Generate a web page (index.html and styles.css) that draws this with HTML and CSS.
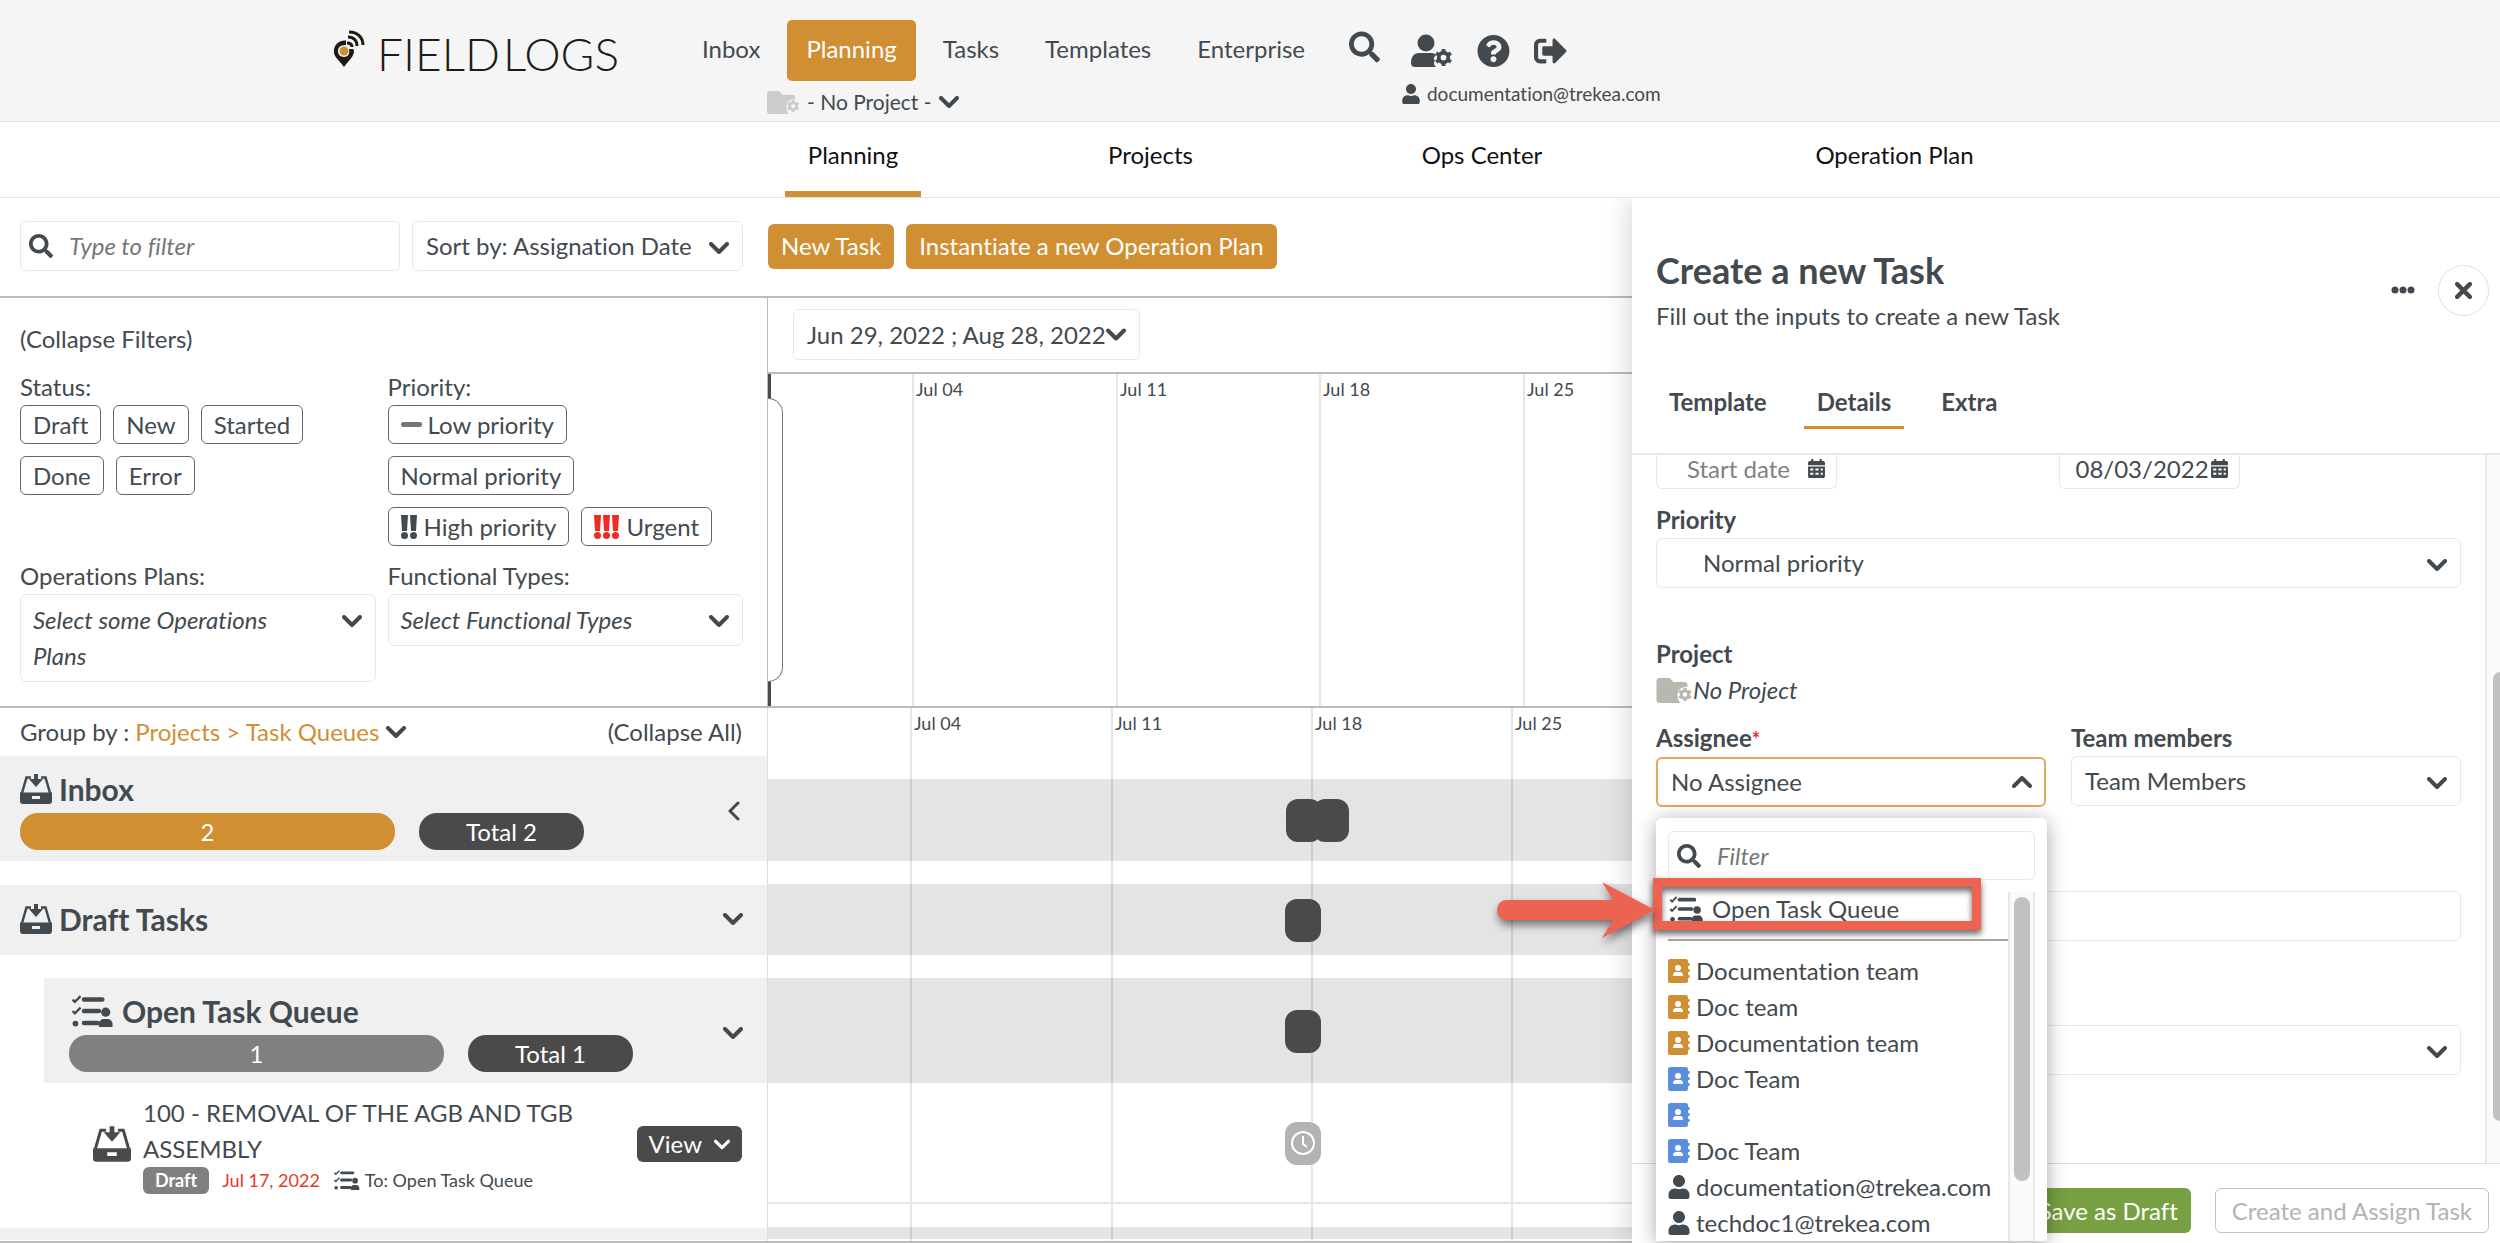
FILE: index.html
```html
<!DOCTYPE html>
<html lang="en">
<head>
    <meta charset="UTF-8">
    <meta name="viewport" content="width=device-width, initial-scale=1.0">
    <title>Field Logs - Planning</title>
    <link rel="stylesheet" href="styles.css">
</head>
<body>
    <!-- Icon sprite -->
    <svg class="sprite" aria-hidden="true">
        <symbol id="i-search" viewBox="0 0 512 512"><path d="M505 442.7L405.3 343c-4.500-4.500-10.600-7-17-7H372c27.600-35.300 44-79.700 44-128C416 93.100 322.900 0 208 0S0 93.100 0 208s93.100 208 208 208c48.300 0 92.700-16.400 128-44v16.300c0 6.400 2.500 12.500 7 17l99.700 99.700c9.400 9.400 24.600 9.400 33.900 0l28.300-28.300c9.400-9.400 9.400-24.600.1-34zM208 336c-70.700 0-128-57.200-128-128 0-70.700 57.200-128 128-128 70.700 0 128 57.200 128 128 0 70.700-57.200 128-128 128z"/></symbol>
        <symbol id="i-user" viewBox="0 0 448 512"><path d="M224 256c70.700 0 128-57.300 128-128S294.700 0 224 0 96 57.300 96 128s57.300 128 128 128zm89.600 32h-16.700c-22.200 10.200-46.900 16-72.900 16s-50.600-5.800-72.900-16h-16.700C60.200 288 0 348.200 0 422.400V464c0 26.500 21.500 48 48 48h352c26.500 0 48-21.500 48-48v-41.600c0-74.200-60.200-134.400-134.400-134.400z"/></symbol>
        <symbol id="i-help" viewBox="0 0 512 512"><path d="M504 256c0 136.997-111.043 248-248 248S8 392.997 8 256C8 119.083 119.043 8 256 8s248 111.083 248 248zM262.655 90c-54.497 0-89.255 22.957-116.549 63.758-3.536 5.286-2.353 12.415 2.715 16.258l34.699 26.310c5.205 3.947 12.621 3.008 16.665-2.122 17.864-22.658 30.113-35.797 57.303-35.797 20.429 0 45.698 13.148 45.698 32.958 0 14.976-12.363 22.667-32.534 33.976C247.128 238.528 216 254.941 216 296v4c0 6.627 5.373 12 12 12h56c6.627 0 12-5.373 12-12v-1.333c0-28.462 83.186-29.647 83.186-106.667 0-58.002-60.165-102-116.531-102zM256 338c-25.365 0-46 20.635-46 46 0 25.364 20.635 46 46 46s46-20.636 46-46c0-25.365-20.635-46-46-46z"/></symbol>
        <symbol id="i-logout" viewBox="0 0 512 512"><path d="M497 273L329 441c-15 15-41 4.500-41-17v-96H152c-13.300 0-24-10.700-24-24v-96c0-13.300 10.700-24 24-24h136V88c0-21.400 25.900-32 41-17l168 168c9.300 9.400 9.300 24.600 0 34zM192 436v-40c0-6.600-5.400-12-12-12H96c-17.700 0-32-14.300-32-32V160c0-17.700 14.300-32 32-32h84c6.600 0 12-5.400 12-12V76c0-6.600-5.400-12-12-12H96c-53 0-96 43-96 96v192c0 53 43 96 96 96h84c6.600 0 12-5.400 12-12z"/></symbol>
        <symbol id="i-gear" viewBox="0 0 20 20"><circle cx="10" cy="10" r="5" fill="none" stroke="currentColor" stroke-width="4"/><path d="M10 1v4M10 15v4M2.200 5.500l3.500 2M14.300 12.500l3.500 2M2.200 14.500l3.500-2M14.300 7.500l3.500-2" stroke="currentColor" stroke-width="4"/></symbol>
        <symbol id="i-user-gear" viewBox="0 0 42 34"><circle cx="15" cy="9" r="8.500"/><path d="M8 19h13c2 0 3 1 4 2-2 2-3 4-1 6-2 2-1 4 1 6H4c-2 0-4-1-4-4 0-6 3-10 8-10z"/><use href="#i-gear" x="23" y="14" width="19" height="19"/></symbol>
        <symbol id="i-folder" viewBox="0 0 36 25"><path d="M3 0h10l4 4h11c2 0 3 1 3 3v2c-5-1-10 3-10 8 0 3 1 6 3 8H3c-2 0-3-1-3-3V3c0-2 1-3 3-3z"/><use href="#i-gear" x="21" y="9" width="15" height="15"/></symbol>
        <symbol id="i-inbox" viewBox="0 0 32 30"><path d="M11 3.500H6.500L2 19M21 3.500h4.500L30 19" fill="none" stroke="currentColor" stroke-width="2.500"/><path fill-rule="evenodd" d="M0 18.500h32V27c0 2-1 3-3 3H3c-2 0-3-1-3-3zM12 22v3h8v-3z"/><path d="M14 0h4v5h5l-7 8-7-8h5z"/></symbol>
        <symbol id="i-queue" viewBox="0 0 36 28"><path d="M1 4l2 2 5-5M1 14l2 2 5-5" fill="none" stroke="currentColor" stroke-width="2"/><circle cx="3.500" cy="25" r="2.500"/><path d="M11 4h16M11 14h13M11 24.500h12" stroke="currentColor" stroke-width="4" stroke-linecap="round"/><circle cx="30" cy="15" r="4"/><path d="M24 28v-2c0-3 2-5 4-5h4c2 0 4 2 4 5v2z"/></symbol>
        <symbol id="i-book" viewBox="0 0 22 24"><path fill-rule="evenodd" d="M2 0h16c1 0 2 1 2 2v2h1c1 0 1 3 0 3h-1v3h1c1 0 1 3 0 3h-1v3h1c1 0 1 3 0 3h-1v3c0 1-1 2-2 2H2c-1 0-2-1-2-2V2c0-1 1-2 2-2z"/><g fill="#fff"><circle cx="10" cy="9" r="3"/><path d="M5 17c0-3 1-4 3-4h4c2 0 3 1 3 4z"/></g></symbol>
        <symbol id="i-calendar" viewBox="0 0 16 18"><path fill-rule="evenodd" d="M3 0h2v2h6V0h2v2h2l1 1v3H0V3l1-1h2zM0 7h16v10l-1 1H1l-1-1zM2 9v2h3V9zM7 9v2h3V9zM12 9v2h2V9zM2 13v2h3v-2zM7 13v2h3v-2zM12 13v2h2v-2z"/></symbol>
        <symbol id="i-chevron" viewBox="0 0 20 12"><path d="M2 2l8 8 8-8" fill="none" stroke="currentColor" stroke-width="4" stroke-linecap="round" stroke-linejoin="round"/></symbol>
        <symbol id="i-left" viewBox="0 0 12 20"><path d="M10 2l-8 8 8 8" fill="none" stroke="currentColor" stroke-width="3" stroke-linecap="round"/></symbol>
    </svg>

    <header class="topbar">
        <a class="logo" href="#" aria-label="Field Logs">
            <svg class="logo-mark" viewBox="0 0 32 37" aria-hidden="true">
                <path d="M13 10.500C5 10 0 16 1 23c1 5 6 8 10 14 4-6 9-9 10-15 0-1 0-2-1-3h-4c1 5-1 8-5 8s-6-3-6-6c0-4 3-6 8-6z" fill="#1f1a14"/>
                <circle cx="11" cy="21" r="4.500" fill="#d18f33"/>
                <path d="M14 13c3 0 5 1 5 4M15 7c6 0 9 4 9 9M16 2c9 0 14 6 14 13" fill="none" stroke="#1f1a14" stroke-width="3"/>
            </svg>
            <span class="logo-text">FIELD<span class="logo-second">LOGS</span></span>
        </a>
        <div class="nav-block">
            <nav class="main-nav">
                <a href="#">Inbox</a>
                <a href="#" class="active">Planning</a>
                <a href="#">Tasks</a>
                <a href="#">Templates</a>
                <a href="#">Enterprise</a>
            </nav>
            <button class="project-picker" type="button">
                <svg class="icon-folder"><use href="#i-folder"/></svg>
                <span>- No Project -</span>
                <svg class="icon-chevron"><use href="#i-chevron"/></svg>
            </button>
        </div>
        <button class="icon-button top-search" type="button" aria-label="Search"><svg><use href="#i-search"/></svg></button>
        <div class="user-block">
            <div class="user-icons">
                <button class="icon-button wide" type="button" aria-label="User settings"><svg><use href="#i-user-gear"/></svg></button>
                <button class="icon-button" type="button" aria-label="Help"><svg><use href="#i-help"/></svg></button>
                <button class="icon-button" type="button" aria-label="Sign out"><svg><use href="#i-logout"/></svg></button>
            </div>
            <div class="user-mail"><svg><use href="#i-user"/></svg>documentation@trekea.com</div>
        </div>
    </header>

    <nav class="sub-nav">
        <a href="#" class="active">Planning</a>
        <a href="#">Projects</a>
        <a href="#">Ops Center</a>
        <a href="#">Operation Plan</a>
    </nav>

    <div class="page">
        <main class="workspace">
            <div class="toolbar">
                <div class="toolbar-filters">
                    <label class="search-box">
                        <svg><use href="#i-search"/></svg>
                        <input type="text" placeholder="Type to filter" aria-label="Type to filter">
                    </label>
                    <select class="field sort" aria-label="Sort">
                        <option>Sort by: Assignation Date</option>
                    </select>
                </div>
                <div class="toolbar-actions">
                    <button class="btn-primary" type="button">New Task</button>
                    <button class="btn-primary" type="button">Instantiate a new Operation Plan</button>
                </div>
            </div>

            <div class="board">
                <section class="filters">
                    <button class="text-button" type="button">(Collapse Filters)</button>
                    <div class="filter-grid">
                        <div>
                            <div class="filter-label">Status:</div>
                            <div class="tags">
                                <button type="button">Draft</button>
                                <button type="button">New</button>
                                <button type="button">Started</button>
                                <button type="button">Done</button>
                                <button type="button">Error</button>
                            </div>
                        </div>
                        <div>
                            <div class="filter-label">Priority:</div>
                            <div class="tags">
                                <button type="button"><svg class="mark-low" viewBox="0 0 21 5"><rect width="21" height="5" rx="2"/></svg>Low priority</button>
                                <button type="button" class="tag-normal">Normal priority</button>
                                <button type="button"><svg class="mark-high" viewBox="0 0 17 24"><path d="M0 0h7L6 16H1zM9 0h7l-1 16h-5z"/><circle cx="3.500" cy="20.500" r="3.500"/><circle cx="12.500" cy="20.500" r="3.500"/></svg>High priority</button>
                                <button type="button"><svg class="mark-urgent" viewBox="0 0 26 24"><path d="M0 0h7L6 16H1zM9 0h7l-1 16h-5zM18 0h7l-1 16h-5z"/><circle cx="3.500" cy="20.500" r="3.500"/><circle cx="12.500" cy="20.500" r="3.500"/><circle cx="21.500" cy="20.500" r="3.500"/></svg>Urgent</button>
                            </div>
                        </div>
                        <div>
                            <div class="filter-label">Operations Plans:</div>
                            <button class="field multi" type="button">Select some Operations Plans</button>
                        </div>
                        <div>
                            <div class="filter-label">Functional Types:</div>
                            <button class="field multi" type="button">Select Functional Types</button>
                        </div>
                    </div>
                </section>

                <section class="range">
                    <div class="range-bar">
                        <button class="range-button" type="button">Jun 29, 2022 ; Aug 28, 2022<svg><use href="#i-chevron"/></svg></button>
                    </div>
                    <div class="range-chart weeks">
                        <div class="week-start"><div class="range-handle"></div></div>
                        <div class="week">Jul 04</div>
                        <div class="week">Jul 11</div>
                        <div class="week">Jul 18</div>
                        <div class="week">Jul 25</div>
                    </div>
                </section>

                <section class="groups">
                    <div class="group-bar">
                        <span>Group by :</span>
                        <button class="text-button accent" type="button">Projects &gt; Task Queues<svg class="icon-chevron"><use href="#i-chevron"/></svg></button>
                        <button class="text-button end" type="button">(Collapse All)</button>
                    </div>
                    <div class="group">
                        <div>
                            <h2><svg class="icon-inbox"><use href="#i-inbox"/></svg>Inbox</h2>
                            <div class="pills"><span class="pill orange">2</span><span class="pill total">Total 2</span></div>
                        </div>
                        <button class="fold" type="button" aria-label="Expand Inbox"><svg class="icon-left"><use href="#i-left"/></svg></button>
                    </div>
                    <div class="group single">
                        <h2><svg class="icon-inbox"><use href="#i-inbox"/></svg>Draft Tasks</h2>
                        <button class="fold" type="button" aria-label="Fold Draft Tasks"><svg class="icon-chevron"><use href="#i-chevron"/></svg></button>
                    </div>
                    <div class="group nested">
                        <div>
                            <h2><svg class="icon-queue-big"><use href="#i-queue"/></svg>Open Task Queue</h2>
                            <div class="pills"><span class="pill grey">1</span><span class="pill total">Total 1</span></div>
                        </div>
                        <button class="fold" type="button" aria-label="Fold Open Task Queue"><svg class="icon-chevron"><use href="#i-chevron"/></svg></button>
                    </div>
                    <article class="task">
                        <svg class="task-icon"><use href="#i-inbox"/></svg>
                        <div class="task-text">
                            <div>100 - REMOVAL OF THE AGB AND TGB ASSEMBLY</div>
                            <div class="task-meta">
                                <span class="badge">Draft</span>
                                <span class="late">Jul 17, 2022</span>
                                <span class="to"><svg><use href="#i-queue"/></svg>To: Open Task Queue</span>
                            </div>
                        </div>
                        <button class="view" type="button">View<svg><use href="#i-chevron"/></svg></button>
                    </article>
                    <div class="group next"></div>
                </section>

                <section class="timeline">
                    <div class="timeline-grid weeks">
                        <div class="week-start"></div>
                        <div class="week">Jul 04</div>
                        <div class="week">Jul 11</div>
                        <div class="week">Jul 18</div>
                        <div class="week">Jul 25</div>
                    </div>
                    <div class="row inbox-row"><i class="token" style="left: 518px"></i><i class="token" style="left: 545px"></i></div>
                    <div class="row draft-row"><i class="token" style="left: 517px"></i></div>
                    <div class="row queue-row"><i class="token" style="left: 517px"></i></div>
                    <div class="row task-row"><i class="token waiting" style="left: 517px"><svg viewBox="0 0 24 24"><circle cx="12" cy="12" r="11"/><path d="M12 5v8l4 3"/></svg></i></div>
                    <div class="row next-row"></div>
                </section>
            </div>
        </main>

        <aside class="panel">
            <div class="panel-head">
                <div class="panel-title">
                    <div>
                        <h1>Create a new Task</h1>
                        <p>Fill out the inputs to create a new Task</p>
                    </div>
                    <button class="more" type="button" aria-label="More"><svg viewBox="0 0 24 8"><circle cx="4" cy="4" r="3.500"/><circle cx="12" cy="4" r="3.500"/><circle cx="20" cy="4" r="3.500"/></svg></button>
                    <button class="close" type="button" aria-label="Close"><svg viewBox="0 0 16 16"><path d="M2 2l12 12M14 2L2 14"/></svg></button>
                </div>
                <nav class="tabs">
                    <a href="#">Template</a>
                    <a href="#" class="active">Details</a>
                    <a href="#">Extra</a>
                </nav>
            </div>

            <div class="panel-body">
                <form class="task-form">
                    <div class="dates">
                        <label class="date start"><input type="text" placeholder="Start date" aria-label="Start date"><svg><use href="#i-calendar"/></svg></label>
                        <label class="date"><input type="text" value="08/03/2022" aria-label="Due date"><svg><use href="#i-calendar"/></svg></label>
                    </div>
                    <label class="form-label" for="priority">Priority</label>
                    <select class="field priority" id="priority"><option>Normal priority</option></select>

                    <div class="form-label project-label">Project</div>
                    <div class="project-value"><svg><use href="#i-folder"/></svg>No Project</div>

                    <div class="pair">
                        <div class="assignee">
                            <label class="form-label" for="assignee">Assignee<span class="required">*</span></label>
                            <button class="field open" id="assignee" type="button" aria-expanded="true">No Assignee</button>
                            <div class="dropdown">
                                <label class="search-box">
                                    <svg><use href="#i-search"/></svg>
                                    <input type="text" placeholder="Filter" aria-label="Filter">
                                </label>
                                <div class="dropdown-body">
                                    <ul>
                                        <li class="queue-option"><svg class="icon-queue"><use href="#i-queue"/></svg>Open Task Queue</li>
                                        <li><svg class="icon-book team"><use href="#i-book"/></svg>Documentation team</li>
                                        <li><svg class="icon-book team"><use href="#i-book"/></svg>Doc team</li>
                                        <li><svg class="icon-book team"><use href="#i-book"/></svg>Documentation team</li>
                                        <li><svg class="icon-book shared"><use href="#i-book"/></svg>Doc Team</li>
                                        <li><svg class="icon-book shared"><use href="#i-book"/></svg></li>
                                        <li><svg class="icon-book shared"><use href="#i-book"/></svg>Doc Team</li>
                                        <li><svg class="icon-book"><use href="#i-user"/></svg>documentation@trekea.com</li>
                                        <li><svg class="icon-book"><use href="#i-user"/></svg>techdoc1@trekea.com</li>
                                    </ul>
                                    <div class="scroll-track"><div class="scroll-thumb"></div></div>
                                </div>
                                <div class="callout-box"></div>
                                <svg class="callout-arrow" viewBox="0 0 158 56"><path d="M9 18h107L105 0l53 28-53 28 11-18H9a9 10 0 0 1 0-20z"/></svg>
                            </div>
                        </div>
                        <div>
                            <label class="form-label" for="members">Team members</label>
                            <select class="field" id="members"><option>Team Members</option></select>
                        </div>
                    </div>
                    <input class="field spaced" type="text" aria-label="Reference">
                    <select class="field spaced" aria-label="Functional type"><option></option></select>
                </form>
                <div class="panel-scroll"><div class="panel-thumb"></div></div>
            </div>

            <div class="panel-foot">
                <button class="save" type="button">Save as Draft</button>
                <button class="create" type="button" disabled>Create and Assign Task</button>
            </div>
        </aside>
    </div>
</body>
</html>
```

FILE: styles.css
```css
* {
    box-sizing: border-box;
}

body {
    margin: 0;
    height: 100vh;
    display: flex;
    flex-direction: column;
    overflow: hidden;
    font-family: Lato, sans-serif;
    font-size: 24px;
    font-variant-ligatures: none;
    line-height: 36px;
    color: #434a4f;
    background-color: #fff;
}

button, input, select {
    font: inherit;
    font-variant-ligatures: none;
    color: inherit;
}

button {
    padding: 0;
    border: none;
    background: none;
    cursor: pointer;
}

a {
    color: inherit;
    text-decoration: none;
}

h1, h2, p, ul {
    margin: 0;
    padding: 0;
}

svg {
    display: block;
    flex: none;
    fill: currentColor;
}

.sprite {
    position: absolute;
    width: 0;
    height: 0;
}

.icon-chevron {
    width: 20px;
    height: 12px;
}

/* Top bar */
.topbar {
    display: flex;
    height: 122px;
    padding-left: 333px;
    background-color: #f5f5f5;
    border-bottom: 1px solid #e3e3e3;
}

.logo {
    display: flex;
    width: 350px;
    padding-top: 30px;
    color: #1f1a14;
}

.logo-mark {
    width: 32px;
    height: 37px;
}

.logo-text {
    margin-left: 12px;
    font-size: 46px;
    font-weight: 300;
    line-height: 48px;
}

.logo-second {
    margin-left: 3px;
}

.nav-block {
    padding-top: 20px;
}

.main-nav {
    display: flex;
    gap: 8px;
}

.main-nav a {
    padding: 11px 19px 14px;
    border-radius: 5px;
}

.main-nav .active {
    background-color: #d18f33;
    color: #fff;
}

.project-picker {
    display: flex;
    align-items: center;
    gap: 7px;
    height: 42px;
    margin-left: 84px;
    font-size: 21px;
}

.icon-folder {
    width: 33px;
    height: 23px;
    color: #ccc;
}

.icon-button svg {
    width: 33px;
    height: 34px;
}

.icon-button.wide svg {
    width: 42px;
}

.top-search {
    align-self: flex-start;
    margin: 30px 22px 0 25px;
}

.top-search svg {
    width: 31px;
}

.user-icons {
    display: flex;
    gap: 24px;
    padding: 34px 0 0 9px;
}

.user-mail {
    display: flex;
    align-items: center;
    gap: 7px;
    margin-top: 8px;
    font-size: 19px;
}

.user-mail svg {
    width: 18px;
    height: 20px;
}

.sub-nav {
    display: grid;
    grid-template-columns: 136px 459px 204px 621px;
    height: 76px;
    padding-left: 785px;
    border-bottom: 1px solid #e3e3e3;
    color: #111;
    text-align: center;
}

.sub-nav a {
    padding-top: 15px;
}

.sub-nav .active {
    border-bottom: 6px solid #d18f33;
}

/* Page */
.page {
    flex: 1;
    min-height: 0;
    display: grid;
    grid-template-columns: 1632fr 868fr;
}

.workspace {
    display: flex;
    flex-direction: column;
    min-width: 0;
    min-height: 0;
    border-bottom: 2px solid #bbb;
}

.toolbar, .board {
    display: grid;
    grid-template-columns: 768fr 864fr;
}

.toolbar {
    height: 100px;
    flex: none;
    align-items: center;
    padding-bottom: 2px;
    border-bottom: 2px solid #bbb;
}

.toolbar-filters {
    display: flex;
    gap: 12px;
    padding: 0 25px 0 20px;
}

.toolbar-filters .search-box {
    flex: 1;
}

.toolbar-actions {
    display: flex;
    gap: 12px;
}

.btn-primary {
    height: 45px;
    padding: 0 13px;
    border-radius: 6px;
    background-color: #d18f33;
    color: #fff;
}

.search-box {
    display: flex;
    align-items: center;
    gap: 16px;
    height: 50px;
    padding: 0 8px;
    border: 1px solid #e8e8e8;
    border-radius: 6px;
}

.search-box svg {
    width: 24px;
    height: 24px;
}

.search-box input {
    flex: 1;
    min-width: 0;
    padding: 0;
    border: none;
    outline: none;
    background: none;
}

.search-box input::placeholder {
    color: #777;
    font-style: italic;
}

.field {
    display: block;
    width: 100%;
    min-height: 50px;
    padding: 0 44px 0 13px;
    appearance: none;
    border: 1px solid #e8e8e8;
    border-radius: 6px;
    background: #fff url("data:image/svg+xml,%3Csvg xmlns='http://www.w3.org/2000/svg' viewBox='0 0 20 12'%3E%3Cpath d='M2 2l8 8 8-8' fill='none' stroke='%23434a4f' stroke-width='4' stroke-linecap='round' stroke-linejoin='round'/%3E%3C/svg%3E") no-repeat right 13px top 20px / 20px 12px;
    text-align: left;
}

input.field {
    background-image: none;
}

.field.sort {
    width: 331px;
    flex: none;
}

.field.multi {
    padding: 7px 70px 7px 12px;
    font-style: italic;
}

.field.open {
    border: 2px solid #e0a85d;
    background-image: url("data:image/svg+xml,%3Csvg xmlns='http://www.w3.org/2000/svg' viewBox='0 0 20 12'%3E%3Cpath d='M2 10l8-8 8 8' fill='none' stroke='%23434a4f' stroke-width='4' stroke-linecap='round' stroke-linejoin='round'/%3E%3C/svg%3E");
    background-position: right 12px top 17px;
}

.board {
    flex: 1;
    min-height: 0;
    overflow: hidden;
    grid-template-rows: 410px auto;
}

/* Filters */
.filters {
    padding: 23px 24px 0 20px;
    border-right: 1px solid #bbb;
    border-bottom: 2px solid #bbb;
}

.text-button {
    display: block;
    line-height: 36px;
}

.filter-grid {
    display: grid;
    grid-template-columns: 1fr 1fr;
    gap: 12px;
    margin-top: 12px;
}

.tags {
    display: flex;
    flex-wrap: wrap;
    gap: 12px;
}

.tags button {
    display: flex;
    align-items: center;
    gap: 6px;
    height: 39px;
    padding: 0 12px;
    border: 1px solid #666;
    border-radius: 6px;
}

.tags .tag-normal {
    margin-right: 100px;
}

.mark-low {
    width: 21px;
    height: 5px;
    color: #777;
}

.mark-high {
    width: 17px;
    height: 24px;
}

.mark-urgent {
    width: 26px;
    height: 24px;
    color: #f02c20;
}

/* Weeks */
.range {
    display: flex;
    flex-direction: column;
    min-width: 0;
    border-bottom: 2px solid #bbb;
}

.range-bar {
    height: 76px;
    padding: 11px 25px;
    border-bottom: 2px solid #bbb;
}

.range-button {
    display: flex;
    align-items: center;
    height: 51px;
    padding: 0 13px;
    border: 1px solid #e8e8e8;
    border-radius: 6px;
}

.range-button svg {
    width: 20px;
    height: 13px;
}

.weeks {
    display: grid;
    overflow: hidden;
    font-size: 18px;
    line-height: 30px;
}

.range-chart {
    flex: 1;
    grid-template-columns: 144px 204px 203px 204px 109px;
}

.week {
    padding-left: 2px;
    border-left: 2px solid rgba(0, 0, 0, 0.1);
    white-space: nowrap;
    overflow: hidden;
}

.range-chart .week-start {
    padding: 24px 0;
    border-left: 3px solid #4a4a4a;
}

.range-handle {
    width: 15px;
    height: 100%;
    margin-left: -3px;
    border: 1px solid #777;
    border-left: none;
    border-radius: 0 15px 15px 0;
    background-color: #fff;
}

/* Groups */
.groups {
    min-width: 0;
    border-right: 1px solid #ddd;
}

.group-bar {
    display: flex;
    align-items: center;
    gap: 6px;
    height: 48px;
    padding: 0 25px 0 20px;
}

.accent {
    display: flex;
    align-items: center;
    gap: 7px;
    color: #d18f33;
}

.accent svg {
    color: #434a4f;
}

.end {
    margin-left: auto;
}

.group {
    display: flex;
    align-items: center;
    justify-content: space-between;
    margin-bottom: 24px;
    padding: 15px 24px 11px 20px;
    background-color: #f0f0f0;
}

.group h2 {
    display: flex;
    align-items: center;
    gap: 7px;
    font-size: 30px;
    line-height: 36px;
}

.group.single {
    height: 70px;
    margin-bottom: 23px;
    padding: 0 24px 2px 20px;
}

.group.nested {
    margin-left: 44px;
    margin-bottom: 0;
    padding-left: 25px;
}

.icon-inbox {
    width: 32px;
    height: 30px;
}

.icon-queue-big {
    width: 46px;
    height: 32px;
}

.icon-left {
    width: 12px;
    height: 20px;
    margin-right: 3px;
}

.pills {
    display: flex;
    gap: 24px;
    margin-top: 6px;
}

.pill {
    width: 165px;
    border-radius: 18px;
    background-color: #4a4a4a;
    color: #fff;
    line-height: 37px;
    text-align: center;
}

.pill.orange, .pill.grey {
    width: 375px;
    background-color: #d18f33;
}

.pill.grey {
    background-color: #808080;
}

.task {
    display: flex;
    align-items: center;
    height: 120px;
    margin-bottom: 25px;
    padding: 2px 25px 0 93px;
}

.task-icon {
    width: 38px;
    height: 36px;
    margin-right: 12px;
    color: #4a4a4a;
}

.task-text {
    flex: 1;
    padding-right: 50px;
}

.task-meta {
    display: flex;
    align-items: center;
    gap: 13px;
    font-size: 18px;
    line-height: 27px;
}

.badge {
    padding: 0 12px;
    border-radius: 6px;
    background-color: #808080;
    color: #fff;
    font-weight: bold;
}

.late {
    color: #e8392b;
}

.to {
    display: flex;
    align-items: center;
    gap: 5px;
}

.to svg {
    width: 27px;
    height: 20px;
}

.view {
    display: flex;
    align-items: center;
    gap: 12px;
    height: 36px;
    padding: 0 12px;
    border-radius: 6px;
    background-color: #4a4a4a;
    color: #fff;
}

.view svg {
    width: 16px;
    height: 11px;
}

.group.next {
    height: 12px;
    margin: 0;
    padding: 0;
}

/* Timeline */
.timeline {
    position: relative;
    min-width: 0;
    padding-top: 71px;
}

.timeline-grid {
    position: absolute;
    inset: 0;
    grid-template-columns: 142px 201px 200px 200px 121px;
}

.row {
    position: relative;
    height: 71px;
    margin-bottom: 23px;
    background-color: rgba(0, 0, 0, 0.106);
}

.inbox-row {
    height: 82px;
}

.queue-row {
    height: 105px;
    margin-bottom: 0;
}

.task-row {
    height: 121px;
    background: none;
    border-bottom: 2px solid #e6e6e6;
}

.next-row {
    height: 12px;
    margin: 0;
}

.token {
    position: absolute;
    top: calc(50% - 21px);
    width: 36px;
    height: 43px;
    border-radius: 12px;
    background-color: #4a4a4a;
}

.token.waiting {
    display: grid;
    place-items: center;
    background-color: #b3b3b3;
}

.waiting svg {
    width: 24px;
    height: 24px;
    fill: none;
    stroke: #fff;
    stroke-width: 2;
}

/* Task panel */
.panel {
    position: relative;
    display: flex;
    flex-direction: column;
    min-height: 0;
    background-color: #fff;
    box-shadow: -4px 0 24px rgba(0, 0, 0, 0.15);
    clip-path: inset(0 0 0 -200px);
}

.panel-head {
    height: 257px;
    flex: none;
    padding: 48px 11px 0 24px;
    border-bottom: 2px solid #e8e8e8;
}

.panel-title {
    display: flex;
    align-items: center;
}

.panel-title > div {
    flex: 1;
}

.panel-title h1 {
    font-size: 36px;
    line-height: 48px;
}

.panel-title p {
    margin-top: 4px;
}

.more svg {
    width: 24px;
    height: 8px;
}

.close {
    display: grid;
    place-items: center;
    width: 51px;
    height: 51px;
    margin-left: 23px;
    border: 1px solid #e0e0e0;
    border-radius: 50%;
}

.close svg {
    width: 17px;
    height: 17px;
    stroke: currentColor;
    stroke-width: 4;
    stroke-linecap: round;
}

.tabs {
    display: flex;
    gap: 24px;
    margin-top: 48px;
    font-weight: bold;
}

.tabs a {
    padding: 2px 13px 6px;
    border-bottom: 3px solid transparent;
}

.tabs .active {
    border-color: #d18f33;
}

.panel-body {
    flex: 1;
    min-height: 0;
    display: flex;
}

.task-form {
    flex: 1;
    padding: 0 24px 0 24px;
}

.dates {
    display: grid;
    grid-template-columns: 1fr 1fr;
}

.date {
    display: flex;
    justify-content: space-between;
    width: 181px;
    height: 34px;
    padding: 0 11px 0 16px;
    border: 1px solid #e8e8e8;
    border-top: none;
    border-radius: 0 0 6px 6px;
}

.date.start {
    padding-left: 30px;
}

.date input {
    flex: 1;
    min-width: 0;
    height: 28px;
    padding: 0;
    border: none;
}

.date input::placeholder {
    color: #808080;
}

.date svg {
    width: 17px;
    height: 19px;
    margin-top: 4px;
}

.form-label {
    display: block;
    font-weight: bold;
}

.dates + .form-label {
    margin-top: 13px;
}

.field.priority {
    padding-left: 46px;
}

.project-label {
    margin-top: 48px;
}

.project-value {
    display: flex;
    align-items: center;
    margin-bottom: 12px;
    font-style: italic;
}

.project-value svg {
    width: 37px;
    height: 25px;
    color: #b8b7b2;
}

.pair {
    display: grid;
    grid-template-columns: 1fr 1fr;
    gap: 25px;
}

.required {
    color: #f02c20;
    font-size: 20px;
}

.assignee {
    position: relative;
}

.dropdown {
    position: absolute;
    z-index: 2;
    top: 98px;
    left: 0;
    right: -1px;
    padding: 13px 12px 0;
    border-radius: 6px 6px 0 0;
    background-color: #fff;
    box-shadow: 0 3px 20px rgba(0, 0, 0, 0.35);
}

.dropdown .search-box {
    height: 49px;
}

.dropdown-body {
    display: flex;
    margin-top: 12px;
}

.dropdown ul {
    flex: 1;
    min-width: 0;
    list-style: none;
}

.dropdown li {
    display: flex;
    align-items: center;
    gap: 6px;
    height: 36px;
    white-space: nowrap;
}

.dropdown .queue-option {
    gap: 8px;
    height: 49px;
    margin-bottom: 12px;
    padding-bottom: 13px;
    border-bottom: 2px solid #aaa5a0;
}

.icon-queue {
    width: 36px;
    height: 26px;
}

.icon-book {
    width: 22px;
    height: 24px;
}

.team {
    color: #d18f33;
}

.shared {
    color: #5b8fdd;
}

.scroll-track {
    width: 27px;
    padding: 5px 4px;
    border: solid #e8e8e8;
    border-width: 0 2px;
    background-color: #fafafa;
}

.scroll-thumb {
    width: 16px;
    height: 284px;
    border-radius: 8px;
    background-color: #c1c1c1;
}

/* Highlight over the first option */
.callout-box {
    position: absolute;
    top: 60px;
    left: -3px;
    width: 328px;
    height: 52px;
    border: 9px solid #ec6351;
    filter: drop-shadow(0 4px 3px rgba(0, 0, 0, 0.6));
}

.callout-arrow {
    position: absolute;
    top: 64px;
    left: -159px;
    width: 158px;
    height: 56px;
    fill: #ec6351;
    filter: drop-shadow(1px 5px 4px rgba(0, 0, 0, 0.5));
}

.spaced {
    margin-top: 84px;
}

.panel-scroll {
    width: 15px;
    padding: 217px 0 0 6px;
    border-left: 2px solid #e8e8e8;
    background-color: #fafafa;
}

.panel-thumb {
    height: 449px;
    border-radius: 8px 0 0 8px;
    background-color: #c1c1c1;
}

.panel-foot {
    flex: none;
    display: flex;
    justify-content: flex-end;
    gap: 24px;
    height: 80px;
    padding: 24px 11px 0 0;
    border-top: 1px solid #ddd;
}

.panel-foot button {
    height: 45px;
    padding: 0 13px;
    border-radius: 6px;
}

.save {
    background-color: #77a042;
    color: #fff;
}

.panel-foot .create {
    padding: 0 16px;
    border: 1px solid #c4c4c4;
    color: #b3b3b3;
}
```
